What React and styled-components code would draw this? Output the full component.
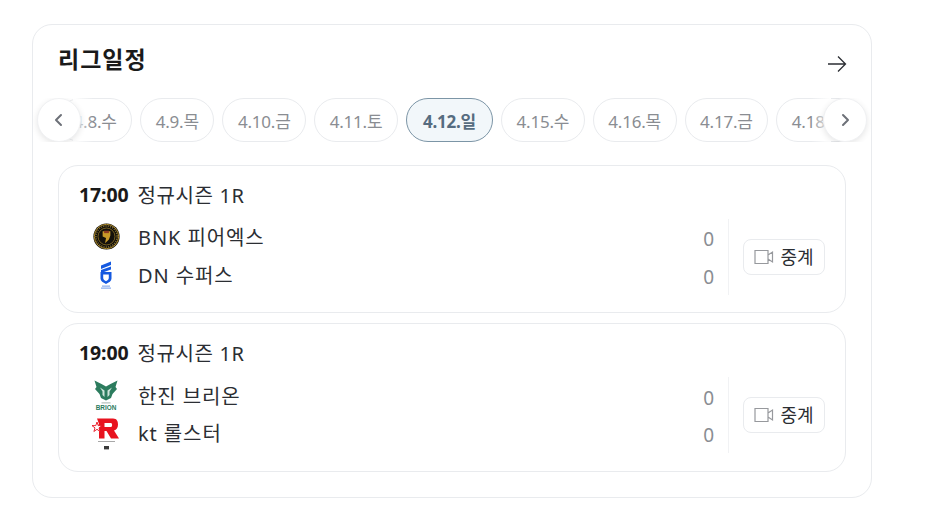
import React from 'react'
import styled, { createGlobalStyle } from 'styled-components'

const GlobalStyle = createGlobalStyle`
  html, body {
    margin: 0;
    padding: 0;
    background: #fff;
    font-family: 'Noto Sans', 'Noto Sans CJK KR', sans-serif;
  }
`

const Page = styled.div`
  width: 932px;
  height: 524px;
  padding: 24px 0 0 32px;
  box-sizing: border-box;
  overflow: hidden;
`

const Panel = styled.section`
  width: 840px;
  height: 474px;
  box-sizing: border-box;
  border: 1px solid #e9ebee;
  border-radius: 20px;
  padding: 18px 25px 0;
`

const Header = styled.div`
  display: flex;
  justify-content: space-between;
  align-items: flex-start;
  height: 55px;
`

const Title = styled.h2`
  margin: 0;
  font-size: 23px;
  line-height: 33px;
  font-weight: 700;
  letter-spacing: 1px;
  color: #1a1a1a;
`

const ArrowLink = styled.a`
  display: block;
  width: 22px;
  height: 22px;
  margin: 10px -2px 0 0;
`

const DateRail = styled.div`
  position: relative;
  margin: 0 -25px;
  height: 44px;
  overflow: hidden;
`

const DateTrack = styled.div`
  display: flex;
  gap: 8px;
  margin-left: 25px;
  width: max-content;
`

const DateChip = styled.div`
  box-sizing: border-box;
  height: 44px;
  padding: 0 ${p => (p.$active ? 16 : 14.5)}px;
  border-radius: 22px;
  border: 1px solid ${p => (p.$active ? '#7c95a6' : '#e9ebee')};
  background: ${p => (p.$active ? '#f2f7fa' : '#fff')};
  color: ${p => (p.$active ? '#566c80' : '#8a8d92')};
  font-size: 17px;
  font-weight: ${p => (p.$active ? 700 : 400)};
  letter-spacing: -0.2px;
  display: flex;
  align-items: center;
  white-space: nowrap;
`

const RailButton = styled.button`
  position: absolute;
  top: 0;
  ${p => (p.$side === 'left' ? 'left: 4px;' : 'right: 4px;')}
  width: 44px;
  height: 44px;
  padding: 0;
  border: 1px solid #f0f1f3;
  border-radius: 50%;
  background: #fff;
  box-shadow: 0 2px 6px rgba(0, 0, 0, 0.1);
  display: flex;
  align-items: center;
  justify-content: center;
`

const RailFade = styled.div`
  position: absolute;
  top: 0;
  ${p => (p.$side === 'left' ? 'left: 40px;' : 'right: 40px;')}
  width: 20px;
  height: 44px;
  background: linear-gradient(${p => (p.$side === 'left' ? '90deg' : '270deg')}, #fff, rgba(255, 255, 255, 0));
`

const MatchList = styled.div`
  display: flex;
  flex-direction: column;
  gap: 10px;
  margin-top: 23px;
`

const MatchCard = styled.article`
  box-sizing: border-box;
  height: ${p => (p.$tall ? 149 : 148)}px;
  border: 1px solid #e9ebee;
  border-radius: 20px;
  padding: 14px 20px 0;
`

const MatchHead = styled.div`
  display: flex;
  align-items: center;
  gap: 9px;
  height: 28px;
  font-size: 20px;
  letter-spacing: 0.6px;
  color: #2b2e33;
`

const MatchTime = styled.strong`
  font-size: 19.5px;
  font-weight: 700;
  color: #1a1a1a;
  letter-spacing: -0.1px;
`

const MatchBody = styled.div`
  display: flex;
  margin-top: ${p => (p.$tall ? 14 : 13)}px;
`

const Teams = styled.div`
  flex: 1;
  display: flex;
  flex-direction: column;
  gap: ${p => (p.$tall ? 7 : 8)}px;
`

const TeamRow = styled.div`
  display: flex;
  align-items: center;
  height: 30px;
  padding-right: 14px;
`

const LogoBox = styled.div`
  width: 30px;
  height: 30px;
  margin: 0 17px 0 12px;
  display: flex;
  align-items: center;
  justify-content: center;
`

const TeamName = styled.span`
  flex: 1;
  font-size: 20px;
  letter-spacing: 0.9px;
  color: #2b2e33;
`

const Score = styled.span`
  font-size: 19px;
  margin-top: 6px;
  color: #8a8d92;
`

const WatchCell = styled.div`
  width: 97px;
  box-sizing: border-box;
  height: 76px;
  margin-top: ${p => (p.$tall ? -3 : -2)}px;
  border-left: 1px solid #f1f2f4;
  display: flex;
  align-items: center;
  justify-content: flex-end;
`

const WatchButton = styled.button`
  box-sizing: border-box;
  width: 82px;
  height: 36px;
  border: 1px solid #e9ebee;
  border-radius: 8px;
  background: #fff;
  padding: 0 0 2px;
  display: flex;
  align-items: center;
  justify-content: center;
  gap: 6px;
  font: inherit;
  font-size: 18px;
  color: #2b2e33;
`

const Chevron = ({ left }) => (
  <svg width="16" height="16" viewBox="0 0 16 16" fill="none">
    <path
      d={left ? 'M10 3 L5 8 L10 13' : 'M6 3 L11 8 L6 13'}
      stroke="#6d7178"
      strokeWidth="2"
      strokeLinecap="round"
      strokeLinejoin="round"
    />
  </svg>
)

const ArrowIcon = () => (
  <svg width="22" height="22" viewBox="0 0 22 22" fill="none">
    <path
      d="M2 11 H19.5 M12 3.5 L19.5 11 L12 18.5"
      stroke="#2b2e33"
      strokeWidth="1.3"
    />
  </svg>
)

const VideoIcon = () => (
  <svg width="20" height="18" viewBox="0 -2 20 18" fill="none">
    <path
      d="M1 1.5 H14 V14.5 H1 Z M14 6 L18.5 3 V13 L14 10"
      stroke="#97999d"
      strokeWidth="1.2"
    />
  </svg>
)

const BnkLogo = () => (
  <svg width="27" height="27" viewBox="0 0 28 28">
    <circle cx="14" cy="14" r="13.6" fill="#0f0d08" />
    <circle cx="14" cy="14" r="12.6" fill="none" stroke="#b8932e" strokeWidth="1" />
    <circle cx="14" cy="14" r="11" fill="none" stroke="#7d6a34" strokeWidth="1.6" strokeDasharray="1.2 1.2" />
    <circle cx="14" cy="14" r="8.8" fill="#14110b" stroke="#a8872c" strokeWidth="0.7" />
    <path d="M10 8.5 H18 V13 L16.5 17 L12.5 21 L13.5 15.5 L10 14 Z" fill="#c99a28" />
    <path d="M11.5 8 H16.5 V10.5 H11.5 Z" fill="#8e3a22" />
  </svg>
)

const DnLogo = () => (
  <svg width="16" height="32" viewBox="0 -3 16 32">
    <path d="M3 4.5 L13 0.5 V4 L3 8 Z" fill="#1559e0" />
    <path d="M3 9 L13 5.5 V8.5 L6 11 H3 Z" fill="#1559e0" />
    <path
      d="M2.5 11 H13.5 V17.5 C13.5 20 11 21.5 8 23 C5 21.5 2.5 20 2.5 17.5 Z M5.2 13.5 V17 C5.2 18.5 6.5 19.5 8 20.2 C9.5 19.5 10.8 18.5 10.8 17 V13.5 Z"
      fill="#1559e0"
      fillRule="evenodd"
    />
    <rect x="4" y="24.6" width="8" height="1" fill="#6f9ae8" />
    <rect x="3" y="26.6" width="10" height="1" fill="#6f9ae8" />
  </svg>
)

const BrionLogo = () => (
  <svg width="26" height="31" viewBox="0 0 26 31">
    <path
      d="M1.5 0.5 L8.5 4 L13 6.5 L17.5 4 L24.5 0.5 L22.5 7 L24 9 L19.5 14 L18 18 L13 20.5 L8 18 L6.5 14 L2 9 L3.5 7 Z"
      fill="#2c7c5e"
    />
    <path d="M7 7.5 L11.5 10.5 L11.5 17 L9.5 15 L9.5 11.5 Z M19 7.5 L14.5 10.5 L14.5 17 L16.5 15 L16.5 11.5 Z" fill="#cfe6dc" />
    <rect x="8.5" y="22.4" width="9" height="1" fill="#a5b5af" />
    <text x="13" y="30" textAnchor="middle" fontSize="6.4" fontWeight="700" fill="#2c7c5e" fontFamily="Liberation Sans">BRION</text>
  </svg>
)

const KtLogo = () => (
  <svg width="28" height="36" viewBox="0 -4 28 36">
    <path
      d="M5 0.5 H21 C25 0.5 26 3.5 26 6.5 C26 10 24.5 11.5 22 12.5 L27 20.5 H19 L14.5 13 H12.5 V20.5 H7 V12.5 L4 9.5 L7 6 Z M12.5 5 V9 H19 C20.5 9 20.5 5 19 5 Z"
      fill="#e8131f"
      fillRule="evenodd"
    />
    <path d="M5 4 L6.2 7.6 L10 7.6 L7 9.9 L8.1 13.5 L5 11.3 L1.9 13.5 L3 9.9 L0 7.6 L3.8 7.6 Z" fill="#fff" stroke="#e8131f" strokeWidth="0.9" />
    <rect x="6" y="23" width="17" height="1" fill="#a8a8a8" />
    <rect x="12" y="28" width="5" height="3.4" fill="#3a3a3a" />
  </svg>
)

const dates = [
  '4.8.수', '4.9.목', '4.10.금', '4.11.토', '4.12.일',
  '4.15.수', '4.16.목', '4.17.금', '4.18.토',
]

const matches = [
  {
    time: '17:00',
    teams: [
      { name: 'BNK 피어엑스', Logo: BnkLogo },
      { name: 'DN 수퍼스', Logo: DnLogo },
    ],
  },
  {
    time: '19:00',
    tall: true,
    teams: [
      { name: '한진 브리온', Logo: BrionLogo },
      { name: 'kt 롤스터', Logo: KtLogo },
    ],
  },
]

const App = () => (
  <Page>
    <GlobalStyle />
    <Panel>
      <Header>
        <Title>리그일정</Title>
        <ArrowLink><ArrowIcon /></ArrowLink>
      </Header>
      <DateRail>
        <DateTrack>
          {dates.map(d => (
            <DateChip key={d} $active={d === '4.12.일'}>{d}</DateChip>
          ))}
        </DateTrack>
        <RailFade $side="left" />
        <RailFade $side="right" />
        <RailButton $side="left"><Chevron left /></RailButton>
        <RailButton $side="right"><Chevron /></RailButton>
      </DateRail>
      <MatchList>
        {matches.map(m => (
          <MatchCard key={m.time} $tall={m.tall}>
            <MatchHead>
              <MatchTime>{m.time}</MatchTime>
              <span>정규시즌 1R</span>
            </MatchHead>
            <MatchBody $tall={m.tall}>
              <Teams $tall={m.tall}>
                {m.teams.map(({ name, Logo }) => (
                  <TeamRow key={name}>
                    <LogoBox><Logo /></LogoBox>
                    <TeamName>{name}</TeamName>
                    <Score>0</Score>
                  </TeamRow>
                ))}
              </Teams>
              <WatchCell $tall={m.tall}>
                <WatchButton><VideoIcon />중계</WatchButton>
              </WatchCell>
            </MatchBody>
          </MatchCard>
        ))}
      </MatchList>
    </Panel>
  </Page>
)

export default App
